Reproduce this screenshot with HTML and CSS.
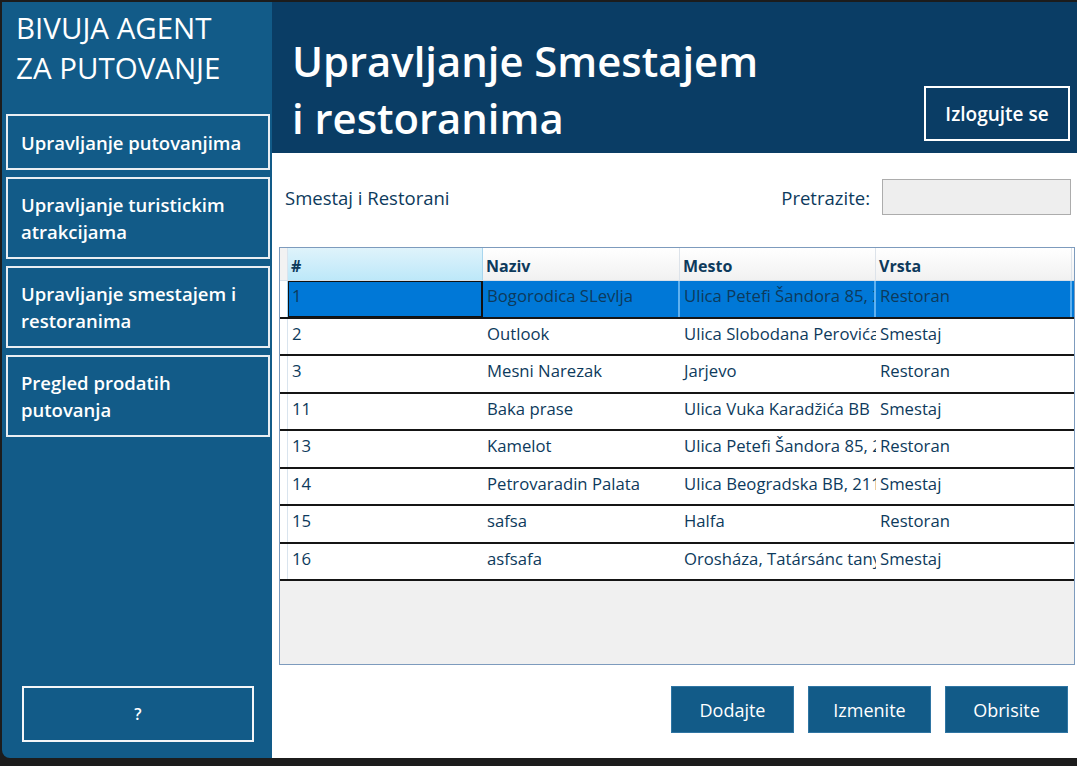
FILE: index.html
```html
<!DOCTYPE html>
<html>
<head>
<meta charset="utf-8">
<link rel="stylesheet" href="styles.css">
</head>
<body>
<div class="window">
  <aside class="sidebar">
    <div class="brand">BIVUJA AGENT<br>ZA PUTOVANJE</div>
    <nav class="nav">
      <div class="nav-btn">Upravljanje putovanjima</div>
      <div class="nav-btn">Upravljanje turistickim atrakcijama</div>
      <div class="nav-btn">Upravljanje smestajem i restoranima</div>
      <div class="nav-btn">Pregled prodatih putovanja</div>
    </nav>
    <div class="help-btn">?</div>
  </aside>
  <main class="main">
    <header class="header">
      <h1 class="title">Upravljanje Smestajem<br>i restoranima</h1>
      <div class="logout">Izlogujte se</div>
    </header>
    <section class="content">
      <div class="toolbar">
        <span class="section-label">Smestaj i Restorani</span>
        <span class="search-label">Pretrazite:</span>
        <div class="search-input"></div>
      </div>
      <div class="grid">
        <div class="row head">
          <div class="stub"></div>
          <div class="cell hcell active">#</div>
          <div class="cell hcell">Naziv</div>
          <div class="cell hcell">Mesto</div>
          <div class="cell hcell">Vrsta</div>
        </div>
        <div class="row sel">
          <div class="stub"></div>
          <div class="cell focus">1</div>
          <div class="cell">Bogorodica SLevlja</div>
          <div class="cell">Ulica Petefi Šandora 85, 21000</div>
          <div class="cell">Restoran</div>
        </div>
        <div class="row">
          <div class="stub"></div>
          <div class="cell">2</div>
          <div class="cell">Outlook</div>
          <div class="cell">Ulica Slobodana Perovića 12</div>
          <div class="cell">Smestaj</div>
        </div>
        <div class="row">
          <div class="stub"></div>
          <div class="cell">3</div>
          <div class="cell">Mesni Narezak</div>
          <div class="cell">Jarjevo</div>
          <div class="cell">Restoran</div>
        </div>
        <div class="row">
          <div class="stub"></div>
          <div class="cell">11</div>
          <div class="cell">Baka prase</div>
          <div class="cell">Ulica Vuka Karadžića BB</div>
          <div class="cell">Smestaj</div>
        </div>
        <div class="row">
          <div class="stub"></div>
          <div class="cell">13</div>
          <div class="cell">Kamelot</div>
          <div class="cell">Ulica Petefi Šandora 85, 21000</div>
          <div class="cell">Restoran</div>
        </div>
        <div class="row">
          <div class="stub"></div>
          <div class="cell">14</div>
          <div class="cell">Petrovaradin Palata</div>
          <div class="cell">Ulica Beogradska BB, 21131</div>
          <div class="cell">Smestaj</div>
        </div>
        <div class="row">
          <div class="stub"></div>
          <div class="cell">15</div>
          <div class="cell">safsa</div>
          <div class="cell">Halfa</div>
          <div class="cell">Restoran</div>
        </div>
        <div class="row">
          <div class="stub"></div>
          <div class="cell">16</div>
          <div class="cell">asfsafa</div>
          <div class="cell">Orosháza, Tatársánc tanya</div>
          <div class="cell">Smestaj</div>
        </div>
      </div>
      <div class="actions">
        <div class="act-btn">Dodajte</div>
        <div class="act-btn">Izmenite</div>
        <div class="act-btn">Obrisite</div>
      </div>
    </section>
  </main>
</div>
</body>
</html>
```
FILE: styles.css
```css
* { box-sizing: border-box; }
html, body { margin: 0; padding: 0; }
body {
  background: #1c1c1c;
  width: 1077px;
  height: 766px;
  overflow: hidden;
  font-family: "Open Sans", "Noto Sans", sans-serif;
}
.window {
  margin: 2px 0 0 2px;
  width: 1075px;
  height: 756px;
  display: grid;
  grid-template-columns: 270px 1fr;
  border-bottom-left-radius: 8px;
  overflow: hidden;
}
.sidebar {
  background: #125b88;
  display: flex;
  flex-direction: column;
  padding: 0 0 16px 4px;
}
.brand {
  color: #fff;
  font-size: 29.5px;
  font-weight: 500;
  line-height: 40px;
  padding: 6px 0 0 10px;
  height: 112px;
}
.nav {
  display: flex;
  flex-direction: column;
  gap: 7px;
}
.nav-btn {
  width: 264px;
  border: 2px solid #e9eef2;
  color: #fff;
  font-weight: 600;
  font-size: 18.5px;
  line-height: 27px;
  padding: 0 16px 0 13px;
  display: flex;
  align-items: center;
  min-height: 56px;
}
.nav-btn + .nav-btn { min-height: 82px; }
.help-btn {
  margin: auto 0 0 16px;
  width: 232px;
  height: 56px;
  border: 2px solid #f4f6f8;
  color: #fff;
  font-weight: 600;
  font-size: 16px;
  display: flex;
  align-items: center;
  justify-content: center;
}
.main {
  display: flex;
  flex-direction: column;
  background: #fff;
}
.header {
  background: #0a3d65;
  height: 151px;
  display: flex;
  justify-content: space-between;
  align-items: flex-end;
  padding: 0 7px 12px 20px;
}
.title {
  margin: 0 0 -5px 0;
  color: #fff;
  font-weight: 600;
  font-size: 41.8px;
  line-height: 57px;
}
.logout {
  width: 146px;
  height: 55px;
  border: 2px solid #fff;
  color: #fff;
  font-weight: 600;
  font-size: 19px;
  display: flex;
  align-items: center;
  justify-content: center;
}
.content {
  flex: 1;
  display: flex;
  flex-direction: column;
  padding: 26px 2px 0 7px;
}
.toolbar {
  display: flex;
  align-items: center;
  height: 36px;
  padding-left: 6px;
  color: #0d3a5c;
  font-size: 18.5px;
}
.section-label { flex: 1; }
.search-label { margin-right: 12px; }
.search-input {
  width: 189px;
  height: 36px;
  background: #eeeeee;
  border: 1px solid #acacac;
  margin-right: 4px;
}
.grid {
  margin-top: 32px;
  height: 418px;
  background: #f0f0f0;
  border: 1px solid #7d9bbd;
  color: #0d3a5c;
  font-size: 16.7px;
}
.row {
  display: grid;
  grid-template-columns: 8px 195px 197px 196px 196px;
  height: 37.5px;
  background: #fff;
  border-bottom: 2px solid #151515;
}
.row .stub { border-right: 1px solid #d9e4ee; }
.cell {
  padding: 3px 2px 0 4px;
  white-space: nowrap;
  overflow: hidden;
  text-overflow: clip;
  line-height: 24px;
}
.row.head {
  height: 33px;
  border-bottom: 1px solid #d8e0e8;
  background: linear-gradient(#ffffff, #f1f1f1);
  font-weight: 700;
  font-size: 16px;
}
.row.head .stub { background: #f2f2f2; border-right: 1px solid #d9e4ee; }
.hcell {
  padding: 6px 0 0 3px;
  border-right: 1px solid #dde3ea;
}
.hcell.active { background: linear-gradient(#dff3fb, #bde8f9); border-right: 1px solid #a9d6ee; }
.row.sel { background: #0078d7; }
.row.sel .stub { background: #fff; border-right: 1px solid #9fd3f2; }
.row.sel .cell { border-right: 2px solid #5fb1f0; }
.row.sel .cell.focus { border: 1px solid #111; border-right: 2px solid #111; padding-top: 2px; padding-left: 3px; }
.actions {
  display: flex;
  justify-content: flex-end;
  gap: 14px;
  margin-top: 21px;
  padding-right: 7px;
}
.act-btn {
  width: 123px;
  height: 47px;
  background: #125b88;
  border: 1px solid #2f75a3;
  color: #fff;
  font-size: 18px;
  font-weight: 500;
  display: flex;
  align-items: center;
  justify-content: center;
}
```
